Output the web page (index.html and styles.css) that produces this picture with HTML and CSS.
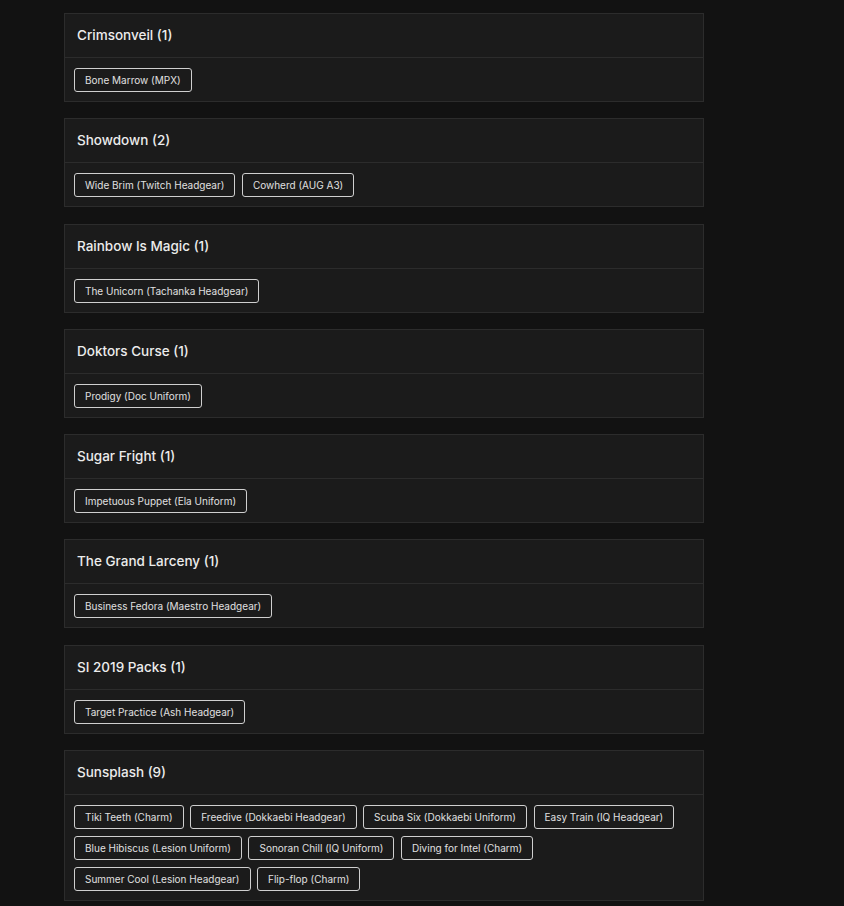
FILE: index.html
```html
<!DOCTYPE html>
<html lang="en">
<head>
    <meta charset="UTF-8">
    <meta name="viewport" content="width=device-width, initial-scale=1.0">
    <title>Bundles</title>
    <link rel="stylesheet" href="styles.css">
</head>
<body>

    <div class="bundleList">

        <div class="bundle">
            <div class="bundleHeader">Crimsonveil (1)</div>
            <div class="bundleItems">
                <span class="item">Bone Marrow (MPX)</span>
            </div>
        </div>

        <div class="bundle">
            <div class="bundleHeader">Showdown (2)</div>
            <div class="bundleItems">
                <span class="item">Wide Brim (Twitch Headgear)</span>
                <span class="item">Cowherd (AUG A3)</span>
            </div>
        </div>

        <div class="bundle">
            <div class="bundleHeader">Rainbow Is Magic (1)</div>
            <div class="bundleItems">
                <span class="item">The Unicorn (Tachanka Headgear)</span>
            </div>
        </div>

        <div class="bundle">
            <div class="bundleHeader">Doktors Curse (1)</div>
            <div class="bundleItems">
                <span class="item">Prodigy (Doc Uniform)</span>
            </div>
        </div>

        <div class="bundle">
            <div class="bundleHeader">Sugar Fright (1)</div>
            <div class="bundleItems">
                <span class="item">Impetuous Puppet (Ela Uniform)</span>
            </div>
        </div>

        <div class="bundle">
            <div class="bundleHeader">The Grand Larceny (1)</div>
            <div class="bundleItems">
                <span class="item">Business Fedora (Maestro Headgear)</span>
            </div>
        </div>

        <div class="bundle">
            <div class="bundleHeader">SI 2019 Packs (1)</div>
            <div class="bundleItems">
                <span class="item">Target Practice (Ash Headgear)</span>
            </div>
        </div>

        <div class="bundle">
            <div class="bundleHeader">Sunsplash (9)</div>
            <div class="bundleItems">
                <span class="item">Tiki Teeth (Charm)</span>
                <span class="item">Freedive (Dokkaebi Headgear)</span>
                <span class="item">Scuba Six (Dokkaebi Uniform)</span>
                <span class="item">Easy Train (IQ Headgear)</span>
                <span class="item">Blue Hibiscus (Lesion Uniform)</span>
                <span class="item">Sonoran Chill (IQ Uniform)</span>
                <span class="item">Diving for Intel (Charm)</span>
                <span class="item">Summer Cool (Lesion Headgear)</span>
                <span class="item">Flip-flop (Charm)</span>
            </div>
        </div>

    </div>

</body>
</html>
```

FILE: styles.css
```css
body {
    font-family: 'Inter', 'Noto Sans', sans-serif;
    margin: 0;
    padding: 0;
    background-color: #121212;
    color: #e6e6e6;
}

.bundleList {
    width: 640px;
    padding: 13px 0 0 64px;
    display: flex;
    flex-direction: column;
    gap: 16.3px;
}

.bundle {
    background-color: #1b1b1b;
    border: 1px solid #2c2c2c;
}

.bundleHeader {
    height: 43px;
    line-height: 43px;
    padding: 0 12px;
    font-size: 13.5px;
    font-weight: 500;
    color: #ececec;
    border-bottom: 1px solid #2c2c2c;
}

.bundleItems {
    display: flex;
    flex-wrap: wrap;
    gap: 7px 6.5px;
    padding: 10px 9px 9px;
}

.item {
    height: 22px;
    line-height: 22px;
    padding: 0 10px;
    font-size: 10px;
    color: #e0e0e0;
    border: 1px solid #cfcfcf;
    border-radius: 3px;
}
```
